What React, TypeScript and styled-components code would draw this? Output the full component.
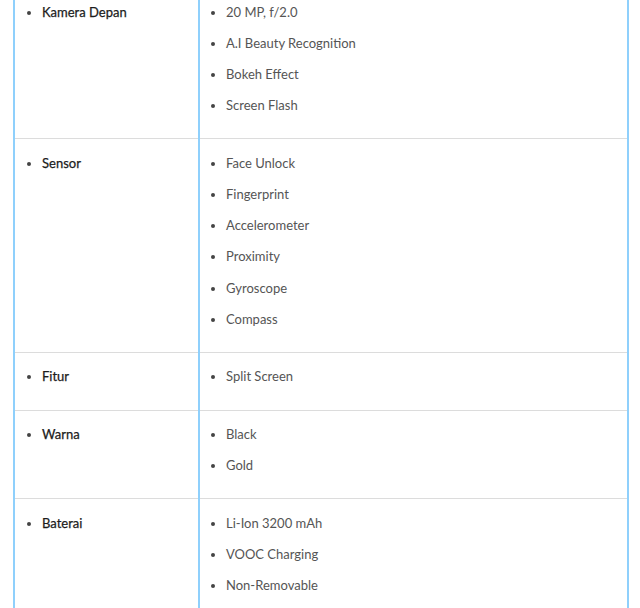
import React from "react";
import styled, { createGlobalStyle } from "styled-components";

const specs: { label: string; items: string[] }[] = [
  { label: "Kamera Depan", items: ["20 MP, f/2.0", "A.I Beauty Recognition", "Bokeh Effect", "Screen Flash"] },
  { label: "Sensor", items: ["Face Unlock", "Fingerprint", "Accelerometer", "Proximity", "Gyroscope", "Compass"] },
  { label: "Fitur", items: ["Split Screen"] },
  { label: "Warna", items: ["Black", "Gold"] },
  { label: "Baterai", items: ["Li-Ion 3200 mAh", "VOOC Charging", "Non-Removable"] },
];

const Global = createGlobalStyle`
  html, body { margin: 0; padding: 0; background: #fff; }
  body { font-family: Lato, "Open Sans", sans-serif; font-size: 13px; overflow: hidden; }
`;

const Page = styled.div`
  padding: 0 11px 0 13px;
  margin-top: -13px;
`;

const Table = styled.table`
  width: 616px;
  border-collapse: collapse;
  table-layout: fixed;
`;

const Row = styled.tr`
  border-top: 1px solid #dcdcdc;
`;

const Cell = styled.td<{ $label?: boolean }>`
  width: ${(p) => (p.$label ? "183px" : "auto")};
  vertical-align: top;
  padding: 13.5px 0 12px 0;
  border-left: 2px solid #8fd0fc;
  border-right: 2px solid #8fd0fc;
`;

const List = styled.ul<{ $label?: boolean }>`
  margin: 0;
  padding: 0 0 0 ${(p) => (p.$label ? "27px" : "26px")};
  list-style: disc;
`;

const Item = styled.li<{ $label?: boolean }>`
  line-height: 21px;
  margin-bottom: 10.2px;
  color: ${(p) => (p.$label ? "#1c1c1c" : "#555")};
  font-weight: 400;
  -webkit-text-stroke: ${(p) => (p.$label ? "0.25px #1c1c1c" : "0")};
  &::marker { color: #444; }
`;

export default function App() {
  return (
    <>
      <Global />
      <Page>
        <Table>
          <tbody>
            {specs.map((s) => (
              <Row key={s.label}>
                <Cell $label>
                  <List $label>
                    <Item $label>{s.label}</Item>
                  </List>
                </Cell>
                <Cell>
                  <List>
                    {s.items.map((it) => (
                      <Item key={it}>{it}</Item>
                    ))}
                  </List>
                </Cell>
              </Row>
            ))}
          </tbody>
        </Table>
      </Page>
    </>
  );
}
